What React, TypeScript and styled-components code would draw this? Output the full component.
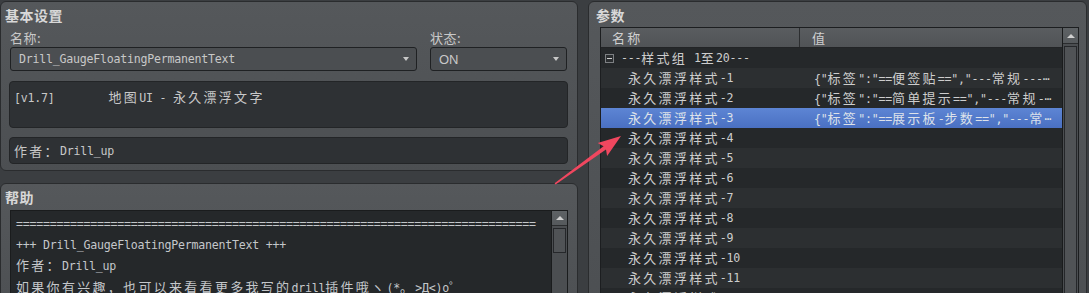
import React from 'react';
import styled, { createGlobalStyle, css } from 'styled-components';

const GlobalStyle = createGlobalStyle`
  html, body {
    margin: 0;
    padding: 0;
    background: #3b3e41;
  }
  body {
    font-family: "DejaVu Sans Mono", "Noto Sans CJK SC", monospace;
  }
`;

// editor text: narrow latin cells, wide CJK cells
const monoText = css`
  font-family: "DejaVu Sans Mono", monospace;
  font-size: 11.6px;
  letter-spacing: -0.23px;
`;

const CJK_RE = /([\u2e80-\u9fff\u3000-\u30ff\uff00-\uffef]+)/;

const Han = styled.span`
  font-family: "Noto Sans CJK SC", sans-serif;
  font-size: 13px;
  letter-spacing: 2.3px;
`;

const Mixed = ({ text }: { text: string }) => (
  <>
    {text.split(CJK_RE).map((part, i) => (i % 2 ? <Han key={i}>{part}</Han> : part))}
  </>
);

const helpLines = [
  '='.repeat(77),
  '+++ Drill_GaugeFloatingPermanentText +++',
  '作者：Drill_up',
  '如果你有兴趣，也可以来看看更多我写的drill插件哦ヽ(*。>Д<)o゜',
];

type Row = { name: string; value?: string; group?: boolean };

const rows: Row[] = [
  { name: '---样式组 1至20---', group: true },
  { name: '永久漂浮样式-1', value: '{"标签":"==便签贴==","---常规---⋯' },
  { name: '永久漂浮样式-2', value: '{"标签":"==简单提示==","---常规-⋯' },
  { name: '永久漂浮样式-3', value: '{"标签":"==展示板-步数==","---常⋯' },
  ...Array.from({ length: 9 }, (_, i) => ({ name: `永久漂浮样式-${i + 4}` })),
];

const SELECTED = 3;

const App = () => {
  return (
    <>
      <GlobalStyle />
      <Window>
        <LeftColumn>
          <Panel $height={170} $pad="0 9px 0 8px">
            <PanelTitle>基本设置</PanelTitle>
            <FieldGrid>
              <FieldLabel>名称:</FieldLabel>
              <FieldLabel>状态:</FieldLabel>
              <Combo>
                <ComboText $mono>Drill_GaugeFloatingPermanentText</ComboText>
                <DropArrow />
              </Combo>
              <Combo>
                <ComboText>ON</ComboText>
                <DropArrow />
              </Combo>
            </FieldGrid>
            <DescBox>
              <Mixed text="[v1.7]        地图UI - 永久漂浮文字" />
            </DescBox>
            <AuthorBox>
              <Mixed text="作者：Drill_up" />
            </AuthorBox>
          </Panel>

          <Panel $height={140} $pad="0 9px 0 8px">
            <PanelTitle>帮助</PanelTitle>
            <HelpArea>
              <HelpText>
                {helpLines.map((line, i) => (
                  <HelpLine key={i}>
                    <Mixed text={line} />
                  </HelpLine>
                ))}
              </HelpText>
              <ScrollBar>
                <ScrollButton $height={15} />
                <ScrollHandle $height={25} />
              </ScrollBar>
            </HelpArea>
          </Panel>
        </LeftColumn>

        <Panel $height={320} $width={499} $pad="0 7px 0 11px">
          <PanelTitle>参数</PanelTitle>
          <TableFrame>
            <TableMain>
              <HeaderRow>
                <HeaderCell $width={199}>
                  <Mixed text="名称" />
                </HeaderCell>
                <HeaderCell>
                  <Mixed text="值" />
                </HeaderCell>
              </HeaderRow>
              {rows.map((row, i) => (
                <TableRow key={i} $odd={i % 2 === 1} $selected={i === SELECTED}>
                  <NameCell $indent={row.group ? 4 : 27}>
                    {row.group && <Expander />}
                    <Mixed text={row.name} />
                  </NameCell>
                  <ValueCell>{row.value && <Mixed text={row.value} />}</ValueCell>
                </TableRow>
              ))}
            </TableMain>
            <ScrollBar>
              <ScrollButton $height={16} />
              <ScrollHandle $height={400} />
            </ScrollBar>
          </TableFrame>
        </Panel>

        <Overlay viewBox="0 0 1089 293">
          <polygon
            points="554.6,183.2 603.6,146.2 597.7,143.1 621,136 607.1,156.1 606,149.4 555.6,184.6"
            fill="#f0475f"
          />
        </Overlay>
      </Window>
    </>
  );
};

export default App;

const Window = styled.div`
  position: relative;
  width: 1089px;
  height: 293px;
  overflow: hidden;
  box-sizing: border-box;
  padding-top: 1px;
  display: flex;
  gap: 10px;
  background: #3b3e41;
`;

const LeftColumn = styled.div`
  width: 578px;
  flex-shrink: 0;
  display: flex;
  flex-direction: column;
  gap: 12px;
`;

const Panel = styled.section<{ $height: number; $width?: number; $pad: string }>`
  box-sizing: border-box;
  flex-shrink: 0;
  width: ${(p) => (p.$width ? `${p.$width}px` : '100%')};
  height: ${(p) => p.$height}px;
  padding: ${(p) => p.$pad};
  display: flex;
  flex-direction: column;
  border: 1px solid #2a2c2e;
  border-radius: 6px;
  background: linear-gradient(180deg, #55585b 0%, #4c4f52 100%);
`;

const PanelTitle = styled.h2`
  margin: 5px 0 0 -4px;
  font: bold 14px/16px "Noto Sans CJK SC", sans-serif;
  letter-spacing: 0.5px;
  color: #d8d8d8;
`;

const FieldGrid = styled.div`
  display: grid;
  grid-template-columns: 407px 137px;
  column-gap: 13px;
  row-gap: 2px;
  margin: 8px 0 0 1px;
`;

const FieldLabel = styled.label`
  font: 13px/14px "Noto Sans CJK SC", sans-serif;
  letter-spacing: 0.5px;
  color: #c8c8c8;
`;

const Combo = styled.div`
  box-sizing: border-box;
  height: 24px;
  display: flex;
  align-items: center;
  justify-content: space-between;
  padding: 0 7px 0 8px;
  border: 1px solid #1f2123;
  border-radius: 3px;
  background: #4b4e51;
`;

const ComboText = styled.span<{ $mono?: boolean }>`
  ${(p) =>
    p.$mono
      ? monoText
      : css`
          font: 13px "Liberation Sans", sans-serif;
        `}
  color: #c8c8c8;
`;

const DropArrow = styled.span`
  width: 0;
  height: 0;
  border-left: 3.5px solid transparent;
  border-right: 3.5px solid transparent;
  border-top: 4px solid #c8c8c8;
`;

const DescBox = styled.div`
  ${monoText}
  box-sizing: border-box;
  height: 47px;
  margin-top: 10px;
  padding: 7px 4px 0;
  border: 1px solid #232527;
  border-radius: 4px;
  background: #2e3134;
  line-height: 16px;
  white-space: pre;
  color: #c8c8c8;
`;

const AuthorBox = styled.div`
  ${monoText}
  box-sizing: border-box;
  height: 27px;
  margin-top: 9px;
  padding: 0 4px;
  display: flex;
  align-items: center;
  border: 1px solid #232527;
  border-radius: 4px;
  background: #2e3134;
  line-height: 16px;
  white-space: pre;
  color: #c8c8c8;
`;

const HelpArea = styled.div`
  flex: 1;
  display: flex;
  margin: 5px 0 0 1px;
  border: 1px solid #1a1c1d;
  background: #25282a;
`;

const HelpText = styled.div`
  ${monoText}
  flex: 1;
  overflow: hidden;
  padding: 3px 0 0 5px;
  line-height: 20.5px;
  color: #c4c7ca;
`;

const HelpLine = styled.div`
  white-space: pre;
`;

const ScrollBar = styled.div`
  width: 15px;
  flex-shrink: 0;
  display: flex;
  flex-direction: column;
  align-items: center;
  border-left: 1px solid #1a1c1d;
  background: #4b4e51;
`;

const ScrollButton = styled.div<{ $height: number }>`
  box-sizing: border-box;
  width: 100%;
  height: ${(p) => p.$height}px;
  display: flex;
  align-items: center;
  justify-content: center;
  border-bottom: 1px solid #2a2c2e;
  background: linear-gradient(180deg, #5e6265, #55595c);

  &::after {
    content: '';
    width: 0;
    height: 0;
    border-left: 4px solid transparent;
    border-right: 4px solid transparent;
    border-bottom: 4px solid #d0d0d0;
  }
`;

const ScrollHandle = styled.div<{ $height: number }>`
  box-sizing: border-box;
  width: 13px;
  height: ${(p) => p.$height}px;
  margin-top: 2px;
  border: 1px solid #25272a;
  background: #505356;
`;

const TableFrame = styled.div`
  flex: 1;
  display: flex;
  margin-top: 4px;
  border: 1px solid #1c1e20;
  background: #25282a;
`;

const TableMain = styled.div`
  ${monoText}
  flex: 1;
  display: flex;
  flex-direction: column;
  line-height: 20px;
  color: #cdcdcd;
`;

const HeaderRow = styled.div`
  display: flex;
  height: 19px;
  border-bottom: 1px solid #222426;
  background: linear-gradient(180deg, #5a5d60, #505356);
`;

const HeaderCell = styled.div<{ $width?: number }>`
  box-sizing: border-box;
  width: ${(p) => (p.$width ? `${p.$width}px` : 'auto')};
  flex: ${(p) => (p.$width ? 'none' : '1')};
  padding-left: ${(p) => (p.$width ? 11 : 12)}px;
  line-height: 19px;
  border-right: ${(p) => (p.$width ? '1px solid #2c2e30' : 'none')};
  color: #cfcfcf;
`;

const TableRow = styled.div<{ $odd: boolean; $selected: boolean }>`
  display: flex;
  height: 20px;
  flex-shrink: 0;
  background: ${(p) =>
    p.$selected
      ? 'linear-gradient(180deg, #5d85d4, #4a70c2)'
      : p.$odd
      ? '#2c2f31'
      : '#25282a'};
  color: ${(p) => (p.$selected ? '#dde2ea' : '#cdcdcd')};
`;

const NameCell = styled.div<{ $indent: number }>`
  box-sizing: border-box;
  width: 199px;
  flex-shrink: 0;
  display: flex;
  align-items: center;
  padding-left: ${(p) => p.$indent}px;
  white-space: pre;
`;

const Expander = styled.span`
  position: relative;
  box-sizing: border-box;
  width: 9px;
  height: 9px;
  margin-right: 7px;
  border: 1px solid #7d8083;
  background: #2a2d2f;

  &::after {
    content: '';
    position: absolute;
    left: 1px;
    top: 3px;
    width: 5px;
    height: 1px;
    background: #d0d0d0;
  }
`;

const ValueCell = styled.div`
  flex: 1;
  overflow: hidden;
  padding-left: 14px;
  white-space: pre;
`;

const Overlay = styled.svg`
  position: absolute;
  left: 0;
  top: 0;
  width: 1089px;
  height: 293px;
  pointer-events: none;
`;
